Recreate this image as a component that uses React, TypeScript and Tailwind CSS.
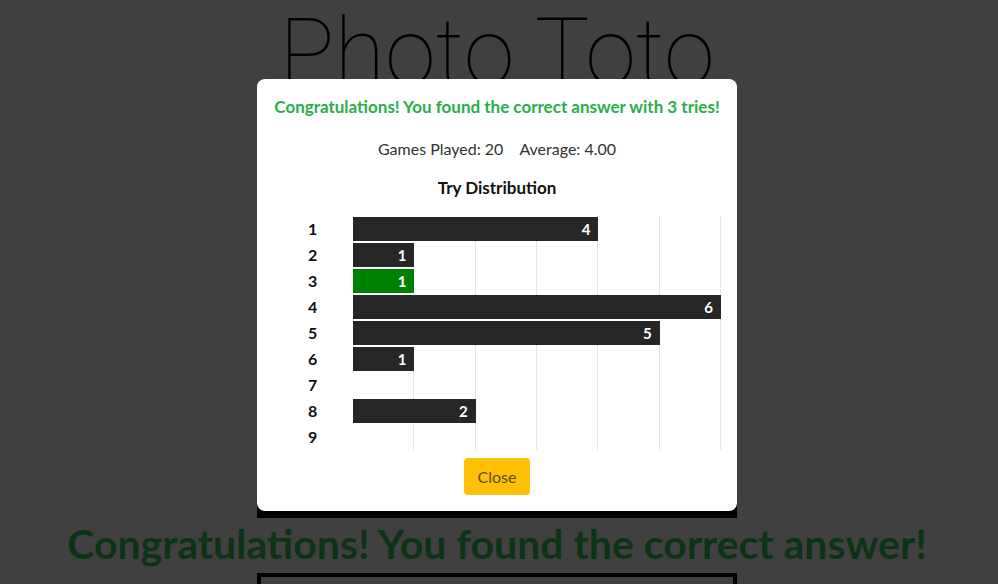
import React from 'react';

const tries = [4, 1, 1, 6, 5, 1, 0, 2, 0];
const currentTry = 3;
const maxCount = Math.max(...tries);

const App: React.FC = () => {
  return (
    <div className="relative h-[584px] overflow-hidden bg-white font-['Lato',sans-serif]">
      {/* page behind the modal */}
      <div className="flex flex-col items-center pr-1">
        <h1 className="-mt-[2px] text-[92px] leading-[1.2] font-thin text-black font-['Roboto',sans-serif]">Photo Toto</h1>
        <div className="h-[410px] w-[480px] shrink-0 bg-black" />
        <h2 className="text-[41px] leading-[52px] font-bold text-[#34cc5c]">
          Congratulations! You found the correct answer!
        </h2>
        <div className="mt-[3px] h-[200px] w-[480px] shrink-0 border-4 border-black" />
      </div>

      <div className="fixed inset-0 bg-black/75" />

      <div className="fixed inset-0 flex justify-center pr-1 pt-[79px]">
        <div className="h-[432px] w-[480px] rounded-lg bg-white p-4 text-center text-[#212529]">
          <p className="text-[17px] leading-6 font-bold text-[#2aae4a]">
            Congratulations! You found the correct answer with 3 tries!
          </p>
          <p className="mt-[18px] text-base leading-6 text-[#333]">
            <span>Games Played: 20</span>
            <span className="ml-4">Average: 4.00</span>
          </p>
          <p className="mt-[15px] text-[17px] leading-6 font-bold text-[#111]">Try Distribution</p>

          <div className="mt-4 flex">
            <div className="flex w-[80px] flex-col">
              {tries.map((_, i) => (
                <div key={i} className="h-[26px] pl-[35px] text-left text-base leading-[26px] font-bold text-[#111]">
                  {i + 1}
                </div>
              ))}
            </div>
            <div className="relative w-[368px]">
              {[1, 2, 3, 4, 5, 6].map((n) => (
                <div
                  key={n}
                  className="absolute top-0 bottom-0 w-px bg-[#e6e6e6]"
                  style={{ left: `${(n / maxCount) * 368 - 1}px` }}
                />
              ))}
              <div className="relative flex flex-col">
                {tries.map((count, i) => (
                  <div key={i} className="h-[26px] py-px">
                    {count > 0 && (
                      <div
                        className={`flex h-6 items-center justify-end pr-2 text-[15px] font-bold text-white ${
                          i + 1 === currentTry ? 'bg-[#008000]' : 'bg-[#262626]'
                        }`}
                        style={{ width: `${(count / maxCount) * 100}%` }}
                      >
                        {count}
                      </div>
                    )}
                  </div>
                ))}
              </div>
            </div>
          </div>

          <button className="mt-2 h-[37px] rounded bg-[#ffc107] px-[14px] text-base text-[#5c4b14]">Close</button>
        </div>
      </div>
    </div>
  );
};

export default App;
